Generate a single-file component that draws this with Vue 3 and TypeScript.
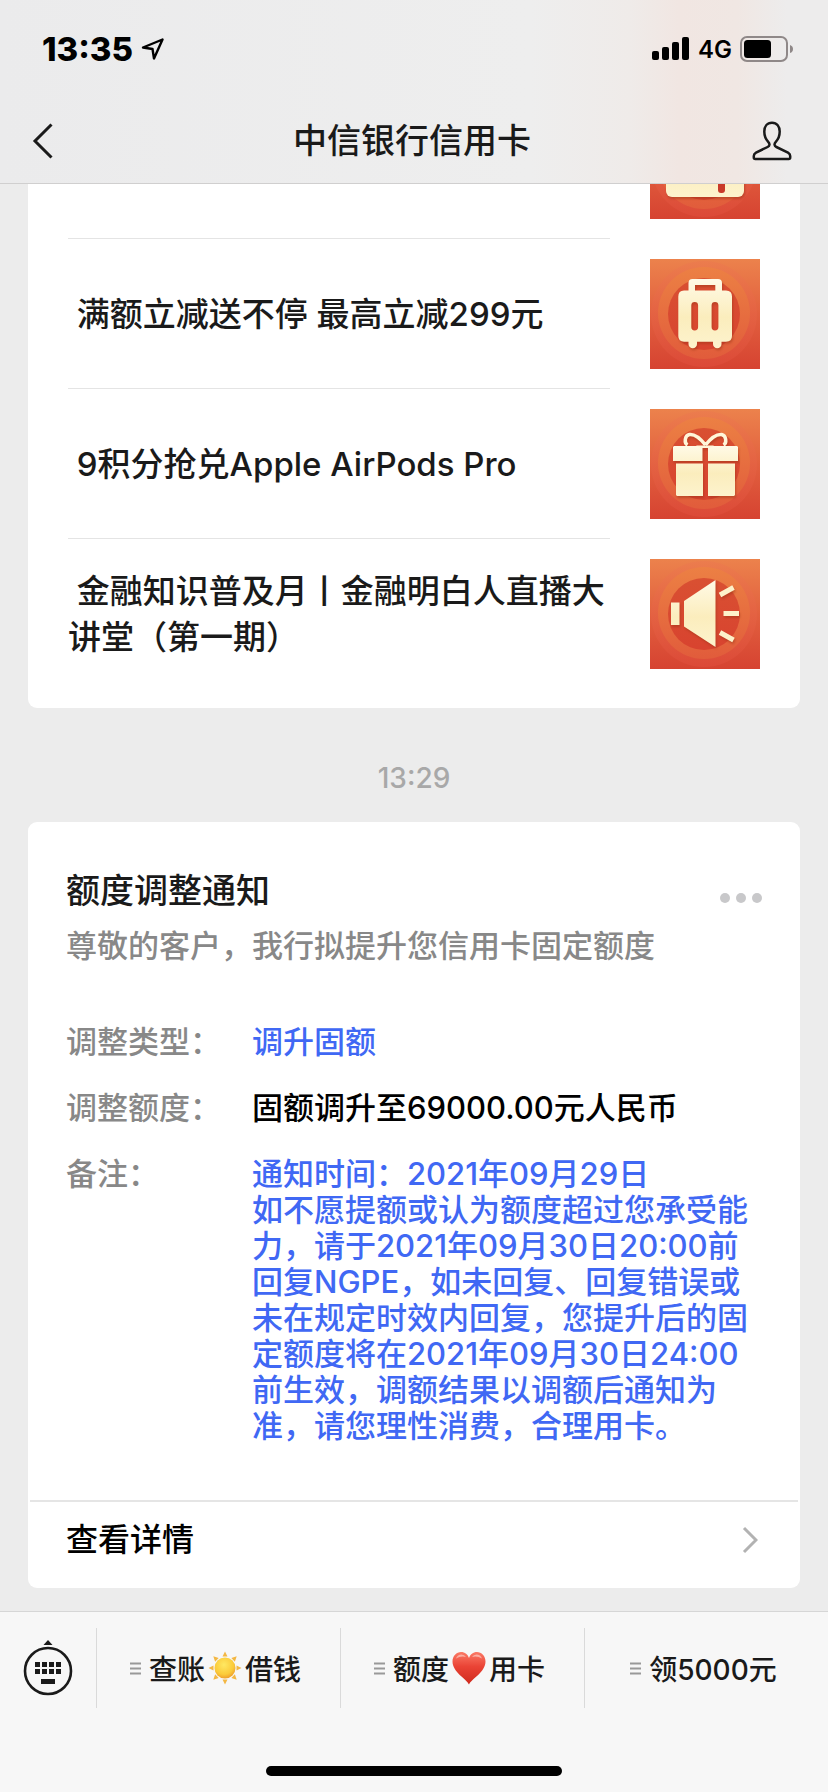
<script setup lang="ts">
type Art = 'wallet' | 'suitcase' | 'gift' | 'speaker'

interface Article {
  art: Art
  title: string
}

interface Field {
  label: string
  lines: string[]
  tone: 'blue' | 'black'
}

interface MenuEntry {
  before: string
  emoji: 'sun' | 'heart' | null
  after: string
}

const articles: Article[] = [
  { art: 'wallet', title: '' },
  { art: 'suitcase', title: ' 满额立减送不停 最高立减299元' },
  { art: 'gift', title: ' 9积分抢兑Apple AirPods Pro' },
  { art: 'speaker', title: ' 金融知识普及月丨金融明白人直播大讲堂（第一期）' },
]

const fields: Field[] = [
  { label: '调整类型：', lines: ['调升固额'], tone: 'blue' },
  { label: '调整额度：', lines: ['固额调升至69000.00元人民币'], tone: 'black' },
  {
    label: '备注：',
    lines: [
      '通知时间：2021年09月29日',
      '如不愿提额或认为额度超过您承受能力，请于2021年09月30日20:00前回复NGPE，如未回复、回复错误或未在规定时效内回复，您提升后的固定额度将在2021年09月30日24:00前生效，调额结果以调额后通知为准，请您理性消费，合理用卡。',
    ],
    tone: 'blue',
  },
]

const menu: MenuEntry[] = [
  { before: '查账', emoji: 'sun', after: '借钱' },
  { before: '额度', emoji: 'heart', after: '用卡' },
  { before: '领5000元', emoji: null, after: '' },
]

const keyColumns: number[] = [11, 18, 25, 32]
const rayAngles: number[] = [0, 45, 90, 135, 180, 225, 270, 315]
</script>

<template>
  <div class="screen">
    <svg class="defs" width="0" height="0" aria-hidden="true">
      <defs>
        <linearGradient id="tile" x1="0" y1="0" x2="0" y2="1">
          <stop offset="0" stop-color="#ec824c" />
          <stop offset="0.5" stop-color="#e2603f" />
          <stop offset="1" stop-color="#d64331" />
        </linearGradient>
        <linearGradient id="halo" x1="0" y1="0" x2="0" y2="1">
          <stop offset="0" stop-color="#ec7a4e" />
          <stop offset="1" stop-color="#de4c3a" />
        </linearGradient>
        <linearGradient id="ring" x1="0" y1="0" x2="0" y2="1">
          <stop offset="0" stop-color="#ec8044" />
          <stop offset="1" stop-color="#e15c3b" />
        </linearGradient>
        <linearGradient id="core" x1="0" y1="0" x2="0" y2="1">
          <stop offset="0" stop-color="#d95032" />
          <stop offset="1" stop-color="#d8432f" />
        </linearGradient>
        <linearGradient id="cream" x1="0" y1="0" x2="0" y2="1">
          <stop offset="0" stop-color="#fffae6" />
          <stop offset="0.55" stop-color="#fbedbd" />
          <stop offset="1" stop-color="#fdf3cd" />
        </linearGradient>
        <radialGradient id="sunFace" cx="0.45" cy="0.35" r="0.65">
          <stop offset="0" stop-color="#ffe862" />
          <stop offset="0.7" stop-color="#fbcb3a" />
          <stop offset="1" stop-color="#efa02c" />
        </radialGradient>
        <linearGradient id="heartFace" x1="0" y1="0" x2="0" y2="1">
          <stop offset="0" stop-color="#fb7a66" />
          <stop offset="0.45" stop-color="#ea4335" />
          <stop offset="1" stop-color="#cf2a1d" />
        </linearGradient>
      </defs>
    </svg>

    <header class="top">
      <div class="status">
        <div class="clock">
          <span>13:35</span>
          <svg width="24" height="24" viewBox="0 0 24 24" aria-hidden="true">
            <path d="M2 10.5 21.5 2.5 13 21.5 11.5 12Z" fill="none" stroke="#000" stroke-width="2.4" stroke-linejoin="round" />
          </svg>
        </div>
        <div class="signals">
          <svg width="38" height="24" viewBox="0 0 38 24" aria-hidden="true">
            <rect x="0" y="14" width="7" height="9" rx="2" />
            <rect x="10" y="10" width="7" height="13" rx="2" />
            <rect x="20" y="5" width="7" height="18" rx="2" />
            <rect x="30" y="0" width="7" height="23" rx="2" />
          </svg>
          <span class="network">4G</span>
          <svg width="54" height="26" viewBox="0 0 54 26" aria-hidden="true">
            <rect x="1" y="1" width="46" height="24" rx="6" fill="none" stroke="#8f8888" stroke-width="2" />
            <rect x="4" y="4" width="27" height="18" rx="3.5" />
            <path d="M50 9Q53 10 53 13 53 16 50 17Z" fill="#8f8888" />
          </svg>
        </div>
      </div>
      <div class="navbar">
        <button class="icon-button back" type="button" aria-label="返回">
          <svg width="22" height="38" viewBox="0 0 22 38">
            <path d="M19.5 2.5 3 19 19.5 35.5" fill="none" stroke="#1a1a1a" stroke-width="3" />
          </svg>
        </button>
        <h1>中信银行信用卡</h1>
        <button class="icon-button" type="button" aria-label="公众号主页">
          <svg width="40" height="40" viewBox="0 0 40 40">
            <path
              d="M20 1.8C15 1.8 12.3 5.5 12.3 10.5 12.3 15 13.5 18 16.2 20.8 18 22.6 18 24.8 15.6 26L4 31.6Q1.8 32.8 1.8 35V36.5Q1.8 38 3.3 38H36.7Q38.2 38 38.2 36.5V35Q38.2 32.8 36 31.6L24.4 26C22 24.8 22 22.6 23.8 20.8 26.5 18 27.7 15 27.7 10.5 27.7 5.5 25 1.8 20 1.8Z"
              fill="none" stroke="#1a1a1a" stroke-width="2.5" stroke-linejoin="round" />
          </svg>
        </button>
      </div>
    </header>

    <main class="chat">
      <section class="card articles">
        <a v-for="article in articles" :key="article.art" class="article" href="#" :aria-label="article.title || '图文消息'">
          <span class="article-title">{{ article.title }}</span>
          <svg class="thumb" width="110" height="110" viewBox="0 0 110 110" aria-hidden="true">
            <rect width="110" height="110" fill="url(#tile)" />
            <circle cx="54" cy="55" r="53" fill="url(#halo)" opacity="0.7" />
            <circle cx="54" cy="54" r="46" fill="url(#ring)" />
            <circle cx="54" cy="55" r="36" fill="url(#core)" />
            <g class="figure">
              <template v-if="article.art === 'wallet'">
                <rect x="16" y="28" width="78" height="60" rx="6" fill="url(#cream)" />
                <rect x="68" y="60" width="7" height="24" rx="3" fill="#c93a29" />
              </template>
              <path
                v-else-if="article.art === 'suitcase'"
                fill="url(#cream)" fill-rule="evenodd"
                d="M38.500 31.500V24Q38.500 20 42.500 20H68Q72 20 72 24V31.500H76Q82 31.500 82 37.500V77Q82 82.700 76 82.700H71.500V85A4.200 4.200 0 0 1 63 85V82.700H47V85A4.200 4.200 0 0 1 38.500 85V82.700H34Q28.300 82.700 28.300 77V37.500Q28.300 31.500 34 31.500ZM45 26V31.500H65.300V26ZM41.300 46.500V68A3.400 3.400 0 0 0 48.100 68V46.500A3.400 3.400 0 0 0 41.300 46.500ZM61.600 46.500V68A3.400 3.400 0 0 0 68.400 68V46.500A3.400 3.400 0 0 0 61.600 46.500Z" />
              <template v-else-if="article.art === 'gift'">
                <path d="M55.500 36C50 29 44 25 39.500 25.500 34.500 26.500 34 34 37.500 36M55.500 36C61 29 67 25 71.500 25.500 76.500 26.500 77 34 73.500 36" fill="none" stroke="#fff6d8" stroke-width="3.500" />
                <path d="M24 37H52.500V52H23V38ZM58 37H87L88 38V52H58ZM26 54.500H53V87H27L26 86ZM58 54.500H85V86L84 87H58Z" fill="url(#cream)" />
                <path d="M46 36.500H64L60 39H50Z" fill="#fff6d8" />
              </template>
              <template v-else>
                <path d="M21 43.500H29.500V66H21ZM34 42 65.500 21V88L34 67.500Z" fill="url(#cream)" />
                <path d="M70 36 83.500 28.500M73.500 54.500H89M70 73.500 83.500 81" stroke="#fdf2ca" stroke-width="5" fill="none" />
              </template>
            </g>
          </svg>
        </a>
      </section>

      <time class="stamp">13:29</time>

      <section class="card notice">
        <div class="notice-body">
          <div class="notice-head">
            <h2>额度调整通知</h2>
            <button class="icon-button dots" type="button" aria-label="更多">
              <svg width="42" height="10" viewBox="0 0 42 10" fill="#c8c8ca">
                <circle cx="5" cy="5" r="5" />
                <circle cx="21" cy="5" r="5" />
                <circle cx="37" cy="5" r="5" />
              </svg>
            </button>
          </div>
          <p class="intro">尊敬的客户，我行拟提升您信用卡固定额度</p>
          <dl>
            <div v-for="field in fields" :key="field.label" class="field">
              <dt>{{ field.label }}</dt>
              <dd :class="field.tone">
                <p v-for="line in field.lines" :key="line">{{ line }}</p>
              </dd>
            </div>
          </dl>
        </div>
        <a class="more" href="#">
          <span>查看详情</span>
          <svg width="16" height="28" viewBox="0 0 16 28" aria-hidden="true">
            <path d="M2 2 14 14 2 26" fill="none" stroke="#b2b2b2" stroke-width="3" />
          </svg>
        </a>
      </section>
    </main>

    <footer class="bottom">
      <nav class="menu">
        <button class="keyboard" type="button" aria-label="切换键盘">
          <svg width="50" height="58" viewBox="0 0 50 58">
            <path d="M25 1 29.500 6H20.500Z" fill="#1a1a1a" />
            <circle cx="25" cy="32" r="23" fill="none" stroke="#1a1a1a" stroke-width="2.600" />
            <g fill="#1a1a1a">
              <rect v-for="x in keyColumns" :key="`a${x}`" :x="x + 1" y="23" width="5" height="5" />
              <rect v-for="x in keyColumns" :key="`b${x}`" :x="x + 1" y="30" width="5" height="5" />
              <rect x="18" y="40" width="14" height="5" />
            </g>
          </svg>
        </button>
        <button v-for="entry in menu" :key="entry.before" class="entry" type="button">
          <svg class="lines" width="11" height="13" viewBox="0 0 11 13" aria-hidden="true">
            <path d="M0 1.500H11M0 6.500H11M0 11.500H11" stroke="#999" stroke-width="2" />
          </svg>
          <span>{{ entry.before }}</span>
          <svg v-if="entry.emoji === 'sun'" class="emoji" width="34" height="34" viewBox="0 0 34 34" aria-hidden="true">
            <path v-for="angle in rayAngles" :key="angle" d="M17 0.500 19.500 5.500H14.500Z" fill="#f3b744" :transform="`rotate(${angle} 17 17)`" />
            <circle cx="17" cy="17" r="10.500" fill="url(#sunFace)" />
          </svg>
          <svg v-else-if="entry.emoji === 'heart'" class="emoji" width="34" height="34" viewBox="0 0 34 34" aria-hidden="true">
            <path d="M17 33.500C14.500 28 0.500 21 0.500 10.500 0.500 5 4.500 1 9 1 13 1 15.800 3.500 17 7 18.200 3.500 21 1 25 1 29.500 1 33.500 5 33.500 10.500 33.500 21 19.500 28 17 33.500Z" fill="url(#heartFace)" />
            <path d="M4 7.500Q5.500 3.500 9.500 3.500 12.500 3.700 14 6 9 4.500 4 7.500ZM20 6Q21.500 3.700 24.500 3.500 28.500 3.500 30 7.500 25 4.500 20 6Z" fill="#fff" opacity="0.45" />
          </svg>
          <span v-if="entry.after">{{ entry.after }}</span>
        </button>
      </nav>
      <div class="home-indicator"></div>
    </footer>
  </div>
</template>

<style>
body {
  margin: 0;
}
</style>

<style scoped>
.screen {
  display: flex;
  flex-direction: column;
  height: 100vh;
  overflow: hidden;
  background: #ececec;
  color: #1a1a1a;
  font-family: Inter, "Noto Sans CJK SC", sans-serif;
  font-weight: 500;
}

.defs {
  position: absolute;
}

svg {
  display: block;
  flex: none;
}

h1,
h2,
p,
dl,
dd {
  margin: 0;
  font-weight: 500;
}

button {
  padding: 0;
  border: 0;
  background: none;
  color: inherit;
  font: inherit;
}

a {
  color: inherit;
  text-decoration: none;
}

.top {
  flex: none;
  border-bottom: 1px solid #d0cfcf;
  background: linear-gradient(90deg, #ebebec 0%, #eeeeee 64%, #efebe9 76%, #f1e6e2 82%, #f0e7e3 89%, #edecec 95%);
}

.status {
  display: flex;
  justify-content: space-between;
  align-items: center;
  height: 98px;
  padding: 0 34px 0 42px;
}

.clock,
.signals {
  display: flex;
  align-items: center;
  gap: 8px;
  color: #000;
}

.signals {
  padding-bottom: 0;
}

.clock {
  font-size: 33px;
  font-weight: 800;
}

.network {
  font-size: 24px;
  font-weight: 600;
}

.navbar {
  display: flex;
  justify-content: space-between;
  align-items: center;
  height: 85px;
  padding: 0 36px 0 32px;
}

.back {
  width: 40px;
}

.navbar h1 {
  font-size: 34px;
  line-height: 48px;
}

.chat {
  display: flex;
  flex: 1;
  flex-direction: column;
  justify-content: flex-end;
  min-height: 0;
  padding: 0 28px 23px;
  overflow: hidden;
}

.card {
  flex: none;
  border-radius: 9px;
  background: #fff;
}

.articles {
  padding: 0 40px 19px;
}

.article {
  display: flex;
  justify-content: space-between;
  gap: 40px;
}

.article-title {
  display: flex;
  flex: 1;
  align-items: center;
  border-bottom: 1px solid #e4e4e4;
  font-size: 33px;
  line-height: 46px;
  white-space: pre-wrap;
}

.article:last-child .article-title {
  border-bottom: 0;
}

.thumb {
  margin: 20px 0;
}

.figure {
  filter: drop-shadow(1px 2px 1px rgb(150 50 20 / 45%));
}

.stamp {
  flex: none;
  padding: 52px 0 26px;
  color: #a8a8a8;
  font-size: 28px;
  line-height: 36px;
  text-align: center;
}

.notice-body {
  padding: 45px 38px 56px;
}

.notice-head {
  display: flex;
  justify-content: space-between;
  align-items: flex-end;
}

.notice-head h2 {
  font-size: 34px;
  line-height: 48px;
}

.dots {
  padding-bottom: 12px;
}

.intro {
  margin: 13px 0 60px;
  color: #888;
  font-size: 31px;
  line-height: 36px;
}

dl {
  display: grid;
  gap: 30px;
  font-size: 31px;
  line-height: 36px;
}

.field {
  display: grid;
  grid-template-columns: 186px 1fr;
}

dt {
  color: #888;
  white-space: nowrap;
}

.blue {
  color: #4068f4;
}

.black {
  color: #000;
}

.more {
  display: flex;
  justify-content: space-between;
  align-items: center;
  margin: 0 2px;
  padding: 14px 40px 24px 36px;
  border-top: 2px solid #e5e5e5;
  color: #000;
  font-size: 32px;
  line-height: 48px;
}

.bottom {
  flex: none;
  border-top: 1px solid #d6d6d6;
  background: #f7f7f7;
}

.menu {
  display: flex;
  padding: 16px 0 58px;
}

.keyboard {
  flex: none;
  width: 96px;
  height: 80px;
  padding-left: 23px;
}

.entry {
  display: flex;
  flex: 1;
  justify-content: center;
  align-items: center;
  height: 80px;
  padding-right: 6px;
  border-left: 1px solid #dadada;
  font-size: 28px;
}

.lines {
  margin-right: 8px;
}

.emoji {
  margin: 0 3px;
}

.home-indicator {
  width: 296px;
  height: 10px;
  margin: 0 auto 16px;
  border-radius: 5px;
  background: #000;
}
</style>
